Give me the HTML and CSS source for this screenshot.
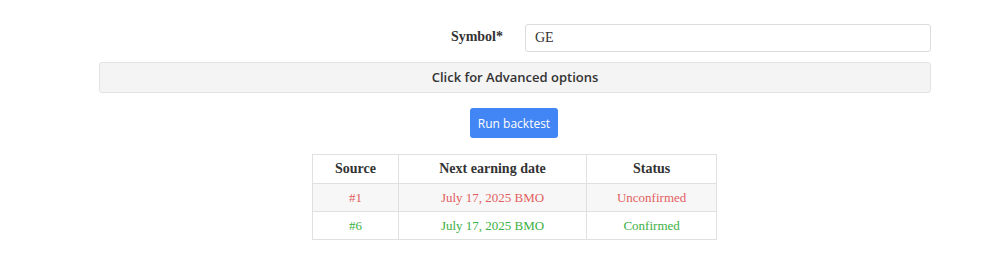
FILE: index.html
```html
<!DOCTYPE html>
<html>
<head>
<meta charset="utf-8">
<link rel="stylesheet" href="styles.css">
</head>
<body>
<div class="wrap">
  <div class="form-row">
    <label class="label">Symbol*</label>
    <input class="input" type="text" value="GE">
  </div>
  <div class="advanced">Click for Advanced options</div>
  <div class="btn-row">
    <button class="btn">Run backtest</button>
  </div>
  <div class="table-row">
    <table class="tbl">
      <thead>
        <tr><th class="c1">Source</th><th class="c2">Next earning date</th><th class="c3">Status</th></tr>
      </thead>
      <tbody>
        <tr class="red odd"><td>#1</td><td>July 17, 2025 BMO</td><td>Unconfirmed</td></tr>
        <tr class="green"><td>#6</td><td>July 17, 2025 BMO</td><td>Confirmed</td></tr>
      </tbody>
    </table>
  </div>
</div>
</body>
</html>
```

FILE: styles.css
```css
html, body {
  margin: 0;
  padding: 0;
  background: #ffffff;
}
body {
  font-family: Georgia, "Liberation Serif", serif;
  color: #333;
}
.wrap {
  width: 832px;
  margin-left: 99px;
  padding-top: 23px;
}
.form-row {
  display: flex;
  align-items: center;
  height: 29px;
}
.label {
  width: 426px;
  flex: none;
  text-align: right;
  font-weight: bold;
  font-size: 14px;
  color: #333;
  padding-right: 22px;
  box-sizing: border-box;
  margin-top: -2px;
}
.input {
  width: 406px;
  flex: none;
  margin: 0;
  height: 28px;
  box-sizing: border-box;
  border: 1px solid #dcdcdc;
  border-radius: 3px;
  padding: 0 9px;
  font-family: Georgia, "Liberation Serif", serif;
  font-size: 14px;
  color: #333;
  outline: none;
}
.advanced {
  margin-top: 10px;
  height: 31px;
  box-sizing: border-box;
  border: 1px solid #e3e3e3;
  border-radius: 3px;
  background: #f4f4f4;
  text-align: center;
  line-height: 29px;
  font-family: "Open Sans", sans-serif;
  font-weight: 600;
  font-size: 13px;
  color: #333;
}
.btn-row {
  display: flex;
  justify-content: center;
  margin-top: 15px;
}
.btn {
  width: 88px;
  height: 30px;
  background: #4285f4;
  border: none;
  border-radius: 3px;
  color: #fff;
  font-family: "Open Sans", sans-serif;
  font-size: 12px;
  padding: 0;
  margin-right: 2px;
}
.table-row {
  display: flex;
  justify-content: center;
  margin-top: 16px;
}
.tbl {
  border-collapse: collapse;
  width: 405px;
  margin-right: 1px;
  font-size: 13px;
}
.tbl th, .tbl td {
  border: 1px solid #e0e0e0;
  text-align: center;
  padding: 0;
}
.tbl th {
  height: 28px;
  font-weight: bold;
  font-size: 14px;
  color: #333;
}
.tbl td {
  height: 27px;
}
.c1 { width: 85px; }
.c2 { width: 188px; }
.c3 { width: 129px; }
.odd td { background: #f7f7f7; }
.red td { color: #e25f5f; }
.green td { color: #3cb043; }
```
